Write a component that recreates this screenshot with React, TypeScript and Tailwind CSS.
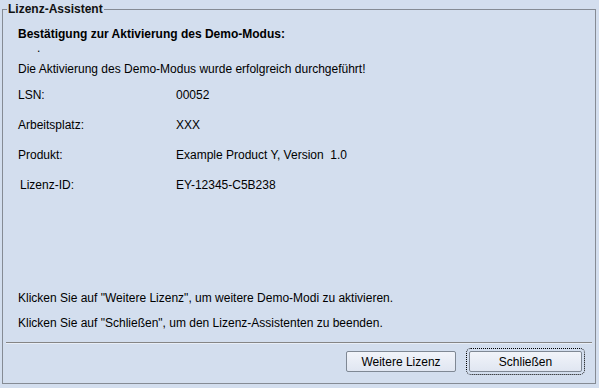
import React from 'react';

const rows = [
  { label: 'LSN:', value: '00052', pad: 'pl-[15px]' },
  { label: 'Arbeitsplatz:', value: 'XXX', pad: 'pl-[15px]' },
  { label: 'Produkt:', value: 'Example Product Y, Version  1.0', pad: 'pl-[15px]' },
  { label: 'Lizenz-ID:', value: 'EY-12345-C5B238', pad: 'pl-[17px]' },
];

export default function App() {
  return (
    <div className="w-[599px] h-[388px] bg-[#d3deee] pt-[1px] pl-[2px] pr-[3px] pb-[4px] font-['Liberation_Sans',Arial,sans-serif] text-[12px] leading-[14px] text-black">
      <fieldset className="h-full border border-[#858b94] flex flex-col min-w-0">
        <legend className="ml-[4px] px-[1px] font-bold text-[12px] leading-[16px] text-[#111]">Lizenz-Assistent</legend>

        <div className="pl-[15px] mt-[10px] font-bold">Bestätigung zur Aktivierung des Demo-Modus:</div>
        <div className="pl-[34px] h-[14px]">.</div>
        <div className="pl-[15px] mt-[7px]">Die Aktivierung des Demo-Modus wurde erfolgreich durchgeführt!</div>

        <div className="mt-[12px] flex flex-col gap-[16px]">
          {rows.map((r) => (
            <div key={r.label} className="flex">
              <div className={`w-[173px] ${r.pad}`}>{r.label}</div>
              <div className="whitespace-pre">{r.value}</div>
            </div>
          ))}
        </div>

        <div className="flex-1" />

        <div className="pl-[15px]">Klicken Sie auf "Weitere Lizenz", um weitere Demo-Modi zu aktivieren.</div>
        <div className="pl-[15px] mt-[11px]">Klicken Sie auf "Schließen", um den Lizenz-Assistenten zu beenden.</div>

        <div className="mx-[3px] mt-[12px] h-[2px] border-t border-[#858585] border-b border-b-[#e8eef7]" />

        <div className="flex justify-end gap-[13px] pr-[13px] mt-[7px] mb-[11px]">
          <button className="w-[110px] h-[21px] rounded-[2px] border border-[#7f8894] bg-gradient-to-b from-[#f1f4fa] to-[#e0e6f1] text-[12px] leading-[14px]">
            Weitere Lizenz
          </button>
          <button className="w-[113px] h-[21px] rounded-[2px] border border-[#7f8894] bg-gradient-to-b from-[#f1f4fa] to-[#e0e6f1] text-[12px] leading-[14px] outline outline-1 outline-dotted outline-black outline-offset-[2px]">
            Schließen
          </button>
        </div>
      </fieldset>
    </div>
  );
}
